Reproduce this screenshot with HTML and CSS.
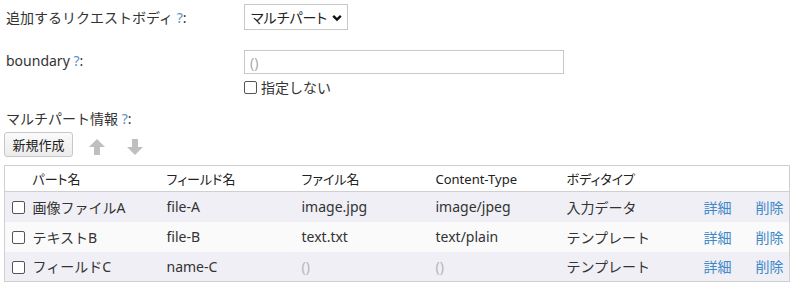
FILE: index.html
```html
<!DOCTYPE html>
<html lang="ja">
<head>
<meta charset="utf-8">
<link rel="stylesheet" href="styles.css">
</head>
<body>
<div class="page">
  <div class="row row-body">
    <div class="label">追加するリクエストボディ <span class="help">?</span>:</div>
    <div class="field">
      <div class="select-wrap">
        <select class="select"><option>マルチパート</option></select>
        <svg class="chev" width="10" height="8" viewBox="0 0 10 8"><path d="M1.2 1.8 L5 5.6 L8.8 1.8" fill="none" stroke="#111" stroke-width="2.4"/></svg>
      </div>
    </div>
  </div>
  <div class="row row-boundary">
    <div class="label">boundary <span class="help">?</span>:</div>
    <div class="field col">
      <input class="text" type="text" placeholder="()">
      <label class="check"><span class="box"></span>指定しない</label>
    </div>
  </div>
  <div class="row row-multi">
    <div class="label">マルチパート情報 <span class="help">?</span>:</div>
  </div>
  <div class="toolbar">
    <button class="btn">新規作成</button>
    <svg class="arrow" width="18" height="18" viewBox="0 0 18 18"><path d="M9 1 L17 9 L12 9 L12 17 L6 17 L6 9 L1 9 Z" fill="#bfbfbf"/></svg>
    <svg class="arrow" width="18" height="18" viewBox="0 0 18 18"><path d="M6 1 L12 1 L12 9 L17 9 L9 17 L1 9 L6 9 Z" fill="#bfbfbf"/></svg>
  </div>
  <table class="parts">
    <thead>
      <tr>
        <th class="c-chk"></th>
        <th class="c-name">パート名</th>
        <th class="c-field">フィールド名</th>
        <th class="c-file">ファイル名</th>
        <th class="c-ct">Content-Type</th>
        <th class="c-type">ボディタイプ</th>
        <th class="c-act"></th>
        <th class="c-del"></th>
      </tr>
    </thead>
    <tbody>
      <tr class="odd">
        <td class="c-chk"><span class="box"></span></td>
        <td>画像ファイルA</td>
        <td>file-A</td>
        <td>image.jpg</td>
        <td>image/jpeg</td>
        <td>入力データ</td>
        <td><a class="link">詳細</a></td>
        <td><a class="link">削除</a></td>
      </tr>
      <tr class="even">
        <td class="c-chk"><span class="box"></span></td>
        <td>テキストB</td>
        <td>file-B</td>
        <td>text.txt</td>
        <td>text/plain</td>
        <td>テンプレート</td>
        <td><a class="link">詳細</a></td>
        <td><a class="link">削除</a></td>
      </tr>
      <tr class="odd">
        <td class="c-chk"><span class="box"></span></td>
        <td>フィールドC</td>
        <td>name-C</td>
        <td class="empty">()</td>
        <td class="empty">()</td>
        <td>テンプレート</td>
        <td><a class="link">詳細</a></td>
        <td><a class="link">削除</a></td>
      </tr>
    </tbody>
  </table>
</div>
</body>
</html>
```

FILE: styles.css
```css
* { box-sizing: border-box; }
html, body { margin: 0; padding: 0; background: #fff; }
body {
  font-family: "Noto Sans", "Noto Sans CJK JP", sans-serif;
  font-size: 14px;
  color: #333;
}
.page { padding: 4px 6px 0 4px; }
.row { display: flex; }
.label { width: 240px; padding-left: 2px; }
.help { color: #5b8fc7; }
.row-body { align-items: center; height: 26px; }
.row-boundary { margin-top: 20px; }
.row-boundary .label { padding-top: 1px; }
.col { display: flex; flex-direction: column; }
.select-wrap { position: relative; width: 104px; height: 26px; }
.select {
  appearance: none; -webkit-appearance: none;
  width: 104px; height: 26px;
  border: 1px solid #c9c9c9; background: #fff;
  font: inherit; font-size: 14px; color: #222;
  font-feature-settings: "palt";
  padding: 0 0 0 6px; margin: 0;
}
.chev { position: absolute; right: 6px; top: 10px; }
.text {
  width: 320px; height: 24px; margin: 0;
  border: 1px solid #c9c9c9; padding: 0 5px;
  font: inherit; font-size: 14px;
}
.text::placeholder { color: #aaa; }
.check { display: flex; align-items: center; gap: 4px; margin-top: 5px; height: 16px; }
.box {
  display: inline-block; width: 13px; height: 13px;
  border: 1px solid #555; border-radius: 2px; background: #fff;
}
.row-multi { margin-top: 13px; }
.toolbar { display: flex; align-items: center; margin-top: 4px; height: 25px; }
.btn {
  height: 25px; width: 69px; padding: 0;
  border: 1px solid #c8c8c8; border-radius: 3px;
  background: linear-gradient(#fafafa, #ececec);
  font: inherit; font-size: 13px; color: #222;
}
.arrow { margin-left: 15px; margin-top: 4px; }
.arrow + .arrow { margin-left: 20px; }
.parts {
  margin-top: 8px;
  width: 786px;
  border-collapse: collapse;
  border: 1px solid #cfcfcf;
}
.parts th {
  font-weight: normal; font-size: 13px; text-align: left;
  font-feature-settings: "palt";
  height: 26px; padding: 0; color: #222;
  border-bottom: 1px solid #cfcfcf;
}
.parts td { height: 30px; padding: 0; font-size: 14px; }
.parts tr.odd td { background: #efeff5; }
.parts tr.even td { background: #fafafa; }
.c-chk { width: 28px; padding-left: 7px !important; }
.c-chk .box { vertical-align: middle; margin-top: -2px; }
.c-name { width: 134px; }
.c-field { width: 135px; }
.c-file { width: 134px; }
.c-ct { width: 131px; }
.c-type { width: 137px; }
.c-act { width: 52px; }
.empty { color: #b5b5b5; }
.link { color: #3f88c9; text-decoration: none; }
```
